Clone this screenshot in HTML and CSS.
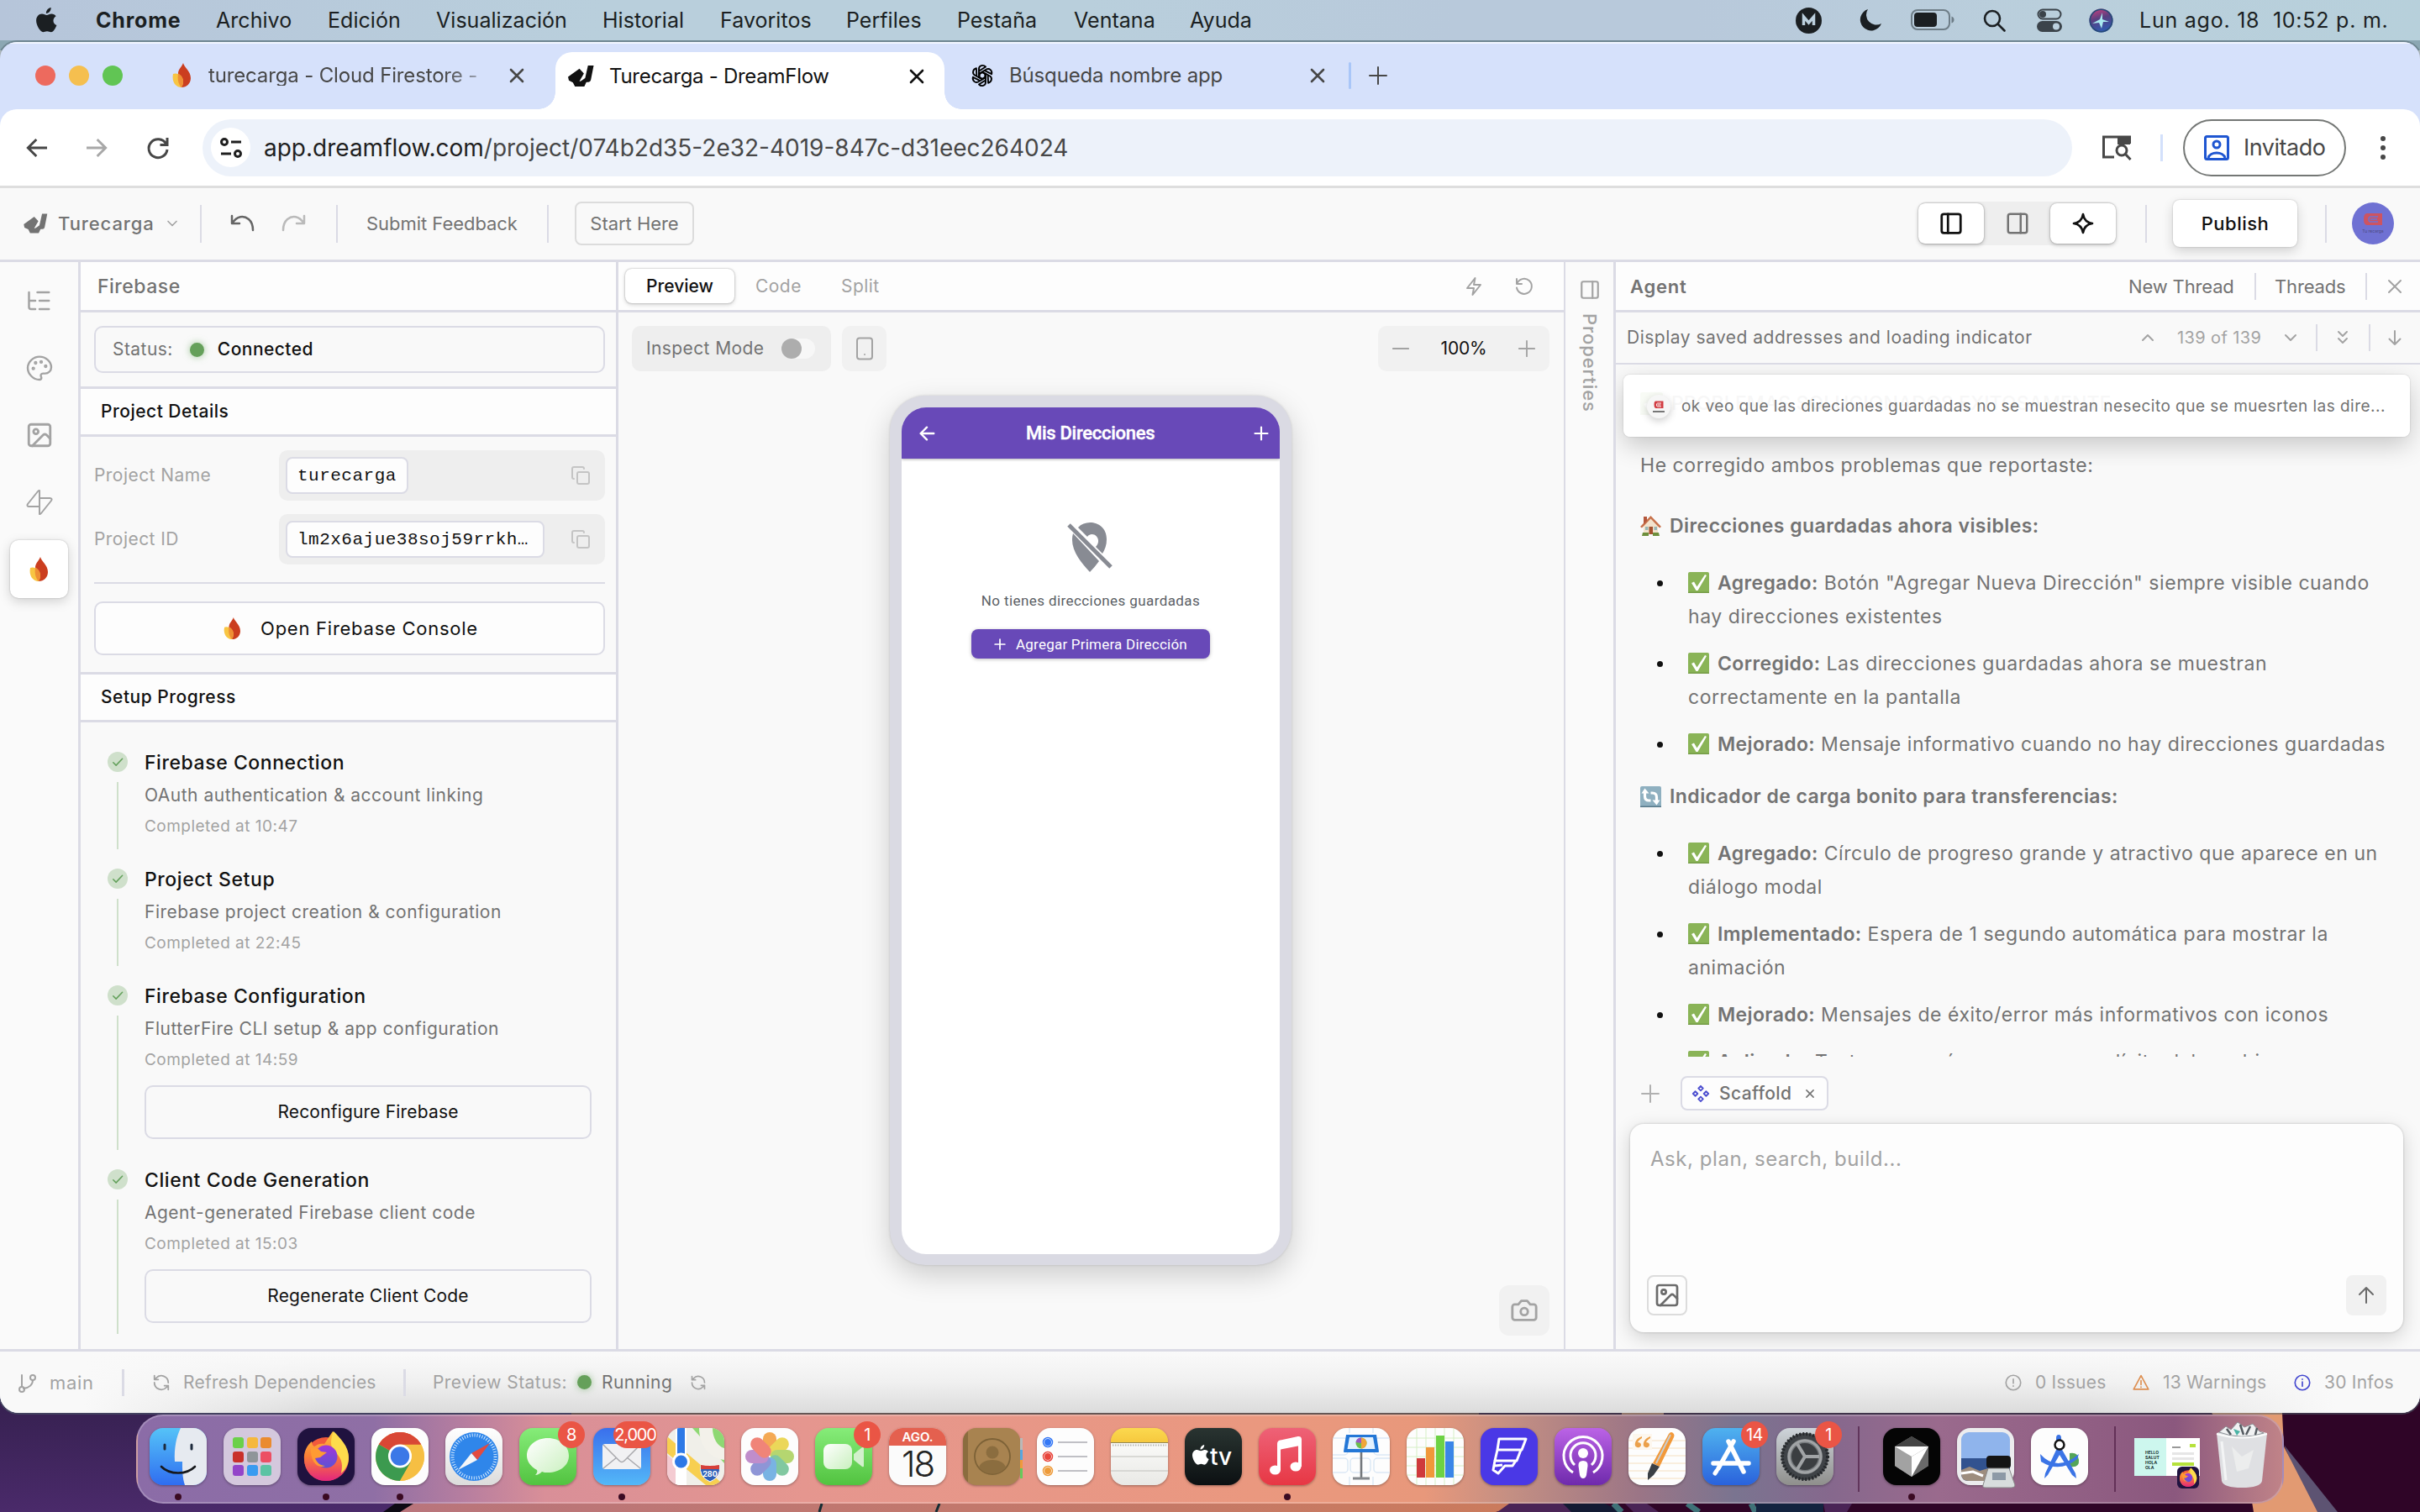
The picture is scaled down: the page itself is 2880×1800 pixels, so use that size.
FILE: index.html
```html
<!DOCTYPE html>
<html lang="es">
<head>
<meta charset="utf-8">
<title>Turecarga - DreamFlow</title>
<link rel="stylesheet" href="styles.css">
</head>
<body>
<svg width="0" height="0" class="defs">
  <defs>
    <symbol id="x" viewBox="0 0 24 24"><path d="M5 5l14 14M19 5L5 19"/></symbol>
    <symbol id="plus" viewBox="0 0 24 24"><path d="M2 12h20M12 2v20"/></symbol>
    <symbol id="left" viewBox="0 0 24 24"><path d="M21 12H4M11.500 4.500L4 12l7.500 7.500"/></symbol>
    <symbol id="copy" viewBox="0 0 24 24"><rect x="8" y="8" width="14" height="14" rx="2"/><path d="M4 16c-1.100 0-2-.9-2-2V4c0-1.100.9-2 2-2h10c1.100 0 2 .9 2 2"/></symbol>
    <symbol id="image" viewBox="0 0 24 24"><rect x="3" y="3" width="18" height="18" rx="2"/><circle cx="9" cy="9" r="2"/><path d="M21 15l-3.100-3.100a2 2 0 0 0-2.800 0L6 21"/></symbol>
    <symbol id="panel-l" viewBox="0 0 24 24"><rect x="3" y="3" width="18" height="18" rx="2"/><path d="M9 3v18"/></symbol>
    <symbol id="panel-r" viewBox="0 0 24 24"><rect x="3" y="3" width="18" height="18" rx="2"/><path d="M15 3v18"/></symbol>
    <symbol id="down" viewBox="0 0 24 24"><path d="M6 9l6 6 6-6"/></symbol>
    <symbol id="up" viewBox="0 0 24 24"><path d="M6 15l6-6 6 6"/></symbol>
    <symbol id="sync" viewBox="0 0 24 24"><path d="M21 12a9 9 0 0 0-15.700-6L3 8M3 3v5h5M3 12a9 9 0 0 0 15.700 6L21 16M16 16h5v5"/></symbol>
    <symbol id="check" viewBox="0 0 24 24"><path d="M5 13l4.500 4.500L19.500 7"/></symbol>
    <symbol id="logo" viewBox="0 0 32 27"><path d="M0 14.500L14 4.500l5.500 6-5.500 9.500h9l-3 6.500H8.500L6 21.500 1 19z"/><path d="M24.500.5H31.500L28 18.500q-.5 2.500-3 2.500H14l7-5z"/></symbol>
    <symbol id="fire" viewBox="0 0 24 30"><path d="M13 0c1 5 9 9.500 9 18 0 6.500-5 11-11 11C7 29 6 20 7 12 7.500 7 11 5 13 0z" fill="#cb3e1f"/><path d="M1 13c5-2.500 12 3 12 9 0 3-1 5-2 7C4 29-1 22 1 13z" fill="#f8c543"/><path d="M7 12.500c4 1.500 6 6 6 9.500 0 3-1 5-2 7-4-4-5-10-4-16.500z" fill="#ee8f35"/></symbol>
    <symbol id="ok" viewBox="0 0 25 25"><rect width="25" height="25" rx="2" fill="#8ab457"/><path d="M4 13l3-1.500 3.500 6L20 3l2 1L11.500 22H9.500z" fill="#fff"/><rect y="23.500" width="25" height="1.500" fill="#759c47"/></symbol>
    <symbol id="apple" viewBox="0 0 24 30"><path d="M17 0c.3 3.500-2.500 6.800-5.500 6.700C11 3.500 14 .4 17 0zM12.300 8.800c1.300 0 3-1.600 5.500-1.500 2 .1 3.800 1 4.900 2.600-4.400 2.700-3.700 8.800.8 10.500-1 2.900-3.600 8-6.400 8-1.700 0-2.400-1-4.600-1-2.200 0-3 1-4.600 1C4.700 28.400 0 20.300 0 15.100 0 10.400 3 7.300 6.600 7.300c2.300 0 3.900 1.500 5.700 1.500z"/></symbol>
    <symbol id="firefox" viewBox="0 0 68 68"><circle cx="34" cy="37" r="26" fill="#f2593c"/><path d="M8 38C7 28 12 20 17 16c0 3 1 5 3 6 4-3 8-4 12-3l10-15c6 6 20 18 19 34-1 14-12 25-27 25S9 52 8 38z" fill="url(#ffg)"/><path d="M43 4c8 8 18 18 18 31 0 8-4 15-9 19 3-14-1-20-9-27-4-5-4-14 0-23z" fill="#fedc4c"/><circle cx="34" cy="34" r="13.500" fill="url(#ffp)"/><path d="M16 24c6-1 9 0 12 4l7 1-8 6-6 1c2 5 6 9 12 9-9 4-18-5-17-21z" fill="#ff9b33"/></symbol>
    <linearGradient id="ffg" x1="0" y1="0" x2="0" y2="1"><stop offset="0" stop-color="#ffc23d"/><stop offset=".5" stop-color="#fb7f36"/><stop offset="1" stop-color="#e3257e"/></linearGradient>
    <linearGradient id="ffp" x1="0" y1="0" x2="0" y2="1"><stop offset="0" stop-color="#a436d8"/><stop offset="1" stop-color="#5c52d4"/></linearGradient>
    <linearGradient id="siri" x1=".3" y1="0" x2=".6" y2="1"><stop offset="0" stop-color="#c2407f"/><stop offset=".4" stop-color="#5a3f80"/><stop offset="1" stop-color="#2b5cb4"/></linearGradient>
    <linearGradient id="glass" x1="0" y1="0" x2="1" y2="1"><stop offset="0" stop-color="#fff"/><stop offset="1" stop-color="#c9f0be"/></linearGradient>
  </defs>
</svg>

<svg class="wallpaper" width="2880" height="1800" viewBox="0 0 2880 1800">
  <defs><linearGradient id="pu" x1="0" y1="0" x2="0" y2="1"><stop offset="0" stop-color="#35204f"/><stop offset="1" stop-color="#4a2a6a"/></linearGradient>
  <linearGradient id="sal" x1="0" y1="0" x2="1" y2="0"><stop offset="0" stop-color="#b9757c"/><stop offset="1" stop-color="#cb7b5c"/></linearGradient></defs>
  <rect width="2880" height="60" fill="#8ba7b3"/>
  <rect y="1600" width="2880" height="200" fill="#2f0527"/>
  <rect y="1660" width="700" height="140" fill="url(#pu)"/>
  <path d="M490 1786h1340l-50 14H476z" fill="url(#sal)"/><path d="M470 1790h22l-16 10h-20z" fill="#0d0a14"/>
  <path d="M680 1680h1080v6H680z" fill="#7b4a3c"/>
  <path d="M978 1790l-3 10M1118 1790l-4 10" stroke="#142c33" stroke-width="3"/>
  <path d="M1796 1790h80l10 10h-104z" fill="#4a2456"/><path d="M1860 1790h50l20 10h-60z" fill="#131a33"/>
  <path d="M1920 1790l10 10M2008 1790l14 10M2084 1790l5 10" stroke="#3f7278" stroke-width="7"/>
  <path d="M1934 1790h26l14 10h-30zM2170 1790h34l-6 10h-26z" fill="#4a2456"/><path d="M2090 1790h80v10h-80z" fill="#13233f"/>
  <path d="M1930 1682h50v4h-50z" fill="#d08866"/>
  <path d="M2718 1720l64 80h-30z" fill="#5d5372"/><path d="M2632 1682h84l2 40 40 78h-76l-10-60z" fill="#e29a72"/>
</svg>

<header class="menubar">
  <svg class="glyph" width="25" height="31"><use href="#apple"/></svg>
  <b>Chrome</b><span>Archivo</span><span>Edición</span><span>Visualización</span><span>Historial</span><span>Favoritos</span><span>Perfiles</span><span>Pestaña</span><span>Ventana</span><span>Ayuda</span>
  <svg width="31" height="31" viewBox="0 0 31 31"><circle cx="15.500" cy="15.500" r="15.500" fill="#1b1f22"/><path d="M9.500 21V11l6 7 6-7v10" fill="none" stroke="#bcd0de" stroke-width="3.500"/></svg>
  <svg width="28" height="28" viewBox="0 0 28 28"><path d="M10 1a13 13 0 1 0 16 17A12 12 0 0 1 10 1z" fill="#1b1f22"/></svg>
  <svg width="52" height="26" viewBox="0 0 52 26"><rect x="1" y="1" width="45" height="23" rx="7" fill="none" stroke="#6e7d87" stroke-width="2"/><rect x="4" y="4" width="27" height="17" rx="4" fill="#1b1f22"/><path d="M48.500 8.500q3 1 3 4t-3 4z" fill="#6e7d87"/></svg>
  <svg class="line" width="27" height="27" viewBox="0 0 27 27" stroke="#1b1f22" stroke-width="2.600"><circle cx="11" cy="11" r="9"/><path d="M18 18l7.500 7.500"/></svg>
  <svg width="30" height="28" viewBox="0 0 30 28"><rect x="1.500" y="1.500" width="27" height="11" rx="5.500" fill="none" stroke="#3b434a" stroke-width="2"/><circle cx="7" cy="7" r="4" fill="#3b434a"/><rect y="15" width="30" height="13" rx="6.500" fill="#3b434a"/><circle cx="23" cy="21.500" r="4" fill="#bcd0de"/></svg>
  <svg width="29" height="29" viewBox="0 0 29 29"><circle cx="14.500" cy="14.500" r="14" fill="url(#siri)"/><circle cx="14.500" cy="14.500" r="13.200" fill="none" stroke="#274a78" stroke-width="1.600"/><path d="M4 18l9-5 3-8 0 8 8 3-7 0-2 8-3-7z" fill="#a9e9f0"/></svg>
  <span class="clock">Lun ago. 18&nbsp; 10:52 p. m.</span>
</header>

<main class="window">
  <div class="tabstrip">
    <div class="lights"><i></i><i></i><i></i></div>
    <div class="tab first"><svg width="24" height="30"><use href="#fire"/></svg><span class="fade">turecarga - Cloud Firestore -</span><svg class="line" width="24" height="24"><use href="#x"/></svg></div>
    <div class="tab active"><svg class="glyph" width="31" height="27"><use href="#logo"/></svg><span>Turecarga - DreamFlow</span><svg class="line" width="24" height="24"><use href="#x"/></svg></div>
    <div class="tab last"><svg class="line" width="28" height="28" viewBox="0 0 28 28" stroke="#000" stroke-width="2"><g id="pet"><path d="M10 6.500V6c0-4 5-5.500 8-2.500M10 6v9.500l4 2.300M18 3.500L11 8"/></g><use href="#pet" transform="rotate(60 14 14)"/><use href="#pet" transform="rotate(120 14 14)"/><use href="#pet" transform="rotate(180 14 14)"/><use href="#pet" transform="rotate(240 14 14)"/><use href="#pet" transform="rotate(300 14 14)"/></svg><span>Búsqueda nombre app</span><svg class="line" width="24" height="24"><use href="#x"/></svg></div>
    <div class="tabsep"></div>
    <svg class="line newtab" width="24" height="24"><use href="#plus"/></svg>
  </div>

  <div class="toolbar">
    <svg class="line" width="32" height="32"><use href="#left"/></svg>
    <svg class="line dim flip" width="32" height="32"><use href="#left"/></svg>
    <svg class="line" width="32" height="32" viewBox="0 0 32 32"><path d="M25.500 11A11 11 0 1 0 27 18M27 4v8.500h-8.500"/></svg>
    <div class="omnibox">
      <div class="site"><svg class="line" width="28" height="24" viewBox="0 0 28 24"><circle cx="6" cy="5" r="3.500"/><path d="M14 5h12M2 19h12"/><circle cx="22" cy="19" r="3.500"/></svg></div>
      <span class="url">app.dreamflow.com<em>/project/074b2d35-2e32-4019-847c-d31eec264024</em></span>
    </div>
    <svg class="line" width="36" height="32" viewBox="0 0 36 32"><path d="M15 27H2.500V3h31v8"/><path d="M19 3h15v9H19z" fill="#474747" stroke="none"/><circle cx="24" cy="19" r="6"/><path d="M28.500 23.500l6 6.500"/></svg>
    <div class="vsep blue"></div>
    <div class="profile"><svg class="line" width="30" height="30" viewBox="0 0 30 30"><rect x="1.500" y="1.500" width="27" height="27" rx="2"/><circle cx="15" cy="11" r="4"/><path d="M5 27c2-8 18-8 20 0"/></svg><span>Invitado</span></div>
    <svg class="glyph dots" width="20" height="30" viewBox="0 0 20 30"><circle cx="10" cy="4" r="3"/><circle cx="10" cy="15" r="3"/><circle cx="10" cy="26" r="3"/></svg>
  </div>

  <div class="apphead">
    <svg class="glyph" width="29" height="24"><use href="#logo"/></svg>
    <span class="name">Turecarga</span>
    <svg class="line dim" width="20" height="20"><use href="#down"/></svg>
    <div class="vsep"></div>
    <svg class="line" width="30" height="26" viewBox="0 0 30 26" stroke-width="2.500"><path d="M2 4v9h9M2.500 12.500C8 4 16 3 22 8c4 3.500 5 8 5 13"/></svg>
    <svg class="line pale flip" width="30" height="26" viewBox="0 0 30 26" stroke-width="2.500"><path d="M2 4v9h9M2.500 12.500C8 4 16 3 22 8c4 3.500 5 8 5 13"/></svg>
    <div class="vsep"></div>
    <span>Submit Feedback</span>
    <div class="vsep"></div>
    <div class="start">Start Here</div>
    <div class="toggles">
      <div class="on"><svg class="line" width="30" height="30" stroke-width="2.200"><use href="#panel-l"/></svg></div>
      <div><svg class="line" width="30" height="30"><use href="#panel-r"/></svg></div>
      <div class="on"><svg class="line" width="28" height="28" viewBox="0 0 28 28" stroke-width="2.600"><path d="M14 3c1 6.500 4.500 10 11 11-6.500 1-10 4.500-11 11-1-6.500-4.500-10-11-11 6.500-1 10-4.500 11-11z"/></svg></div>
    </div>
    <div class="vsep"></div>
    <div class="publish">Publish</div>
    <div class="vsep"></div>
    <div class="avatar"><svg width="24" height="15" viewBox="0 0 24 15"><path d="M5 0h18v14H5Q1 14 1 7t4-7z" fill="#cd5461"/><path d="M18 4H9q-2 0-2 3t2 3h9M9 7h8" stroke="#7072d2" stroke-width="1.500" fill="none"/></svg><small>Tu recarga</small></div>
  </div>

  <div class="body">
    <nav class="rail">
      <div><svg class="line" width="30" height="30" viewBox="0 0 24 24"><path d="M10 4h11M12 12h9M12 20h9M2 4v14a2 2 0 0 0 2 2h4M2 12h6"/></svg></div>
      <div><svg class="line" width="32" height="32" viewBox="0 0 24 24" stroke-width="1.800"><path d="M12 2C6.500 2 1.500 6.500 1.500 12S6.500 22.500 12 22.500c1 0 1.700-.8 1.700-1.700 0-.9-1-1.500-.4-2.800.4-.8 1-1 1.800-1H17c3 0 5.500-2.500 5.500-5.500C22.500 6.300 17.500 2 12 2z"/><circle cx="13.500" cy="6.700" r=".7"/><circle cx="17.500" cy="10.500" r=".7"/><circle cx="8.500" cy="7.500" r=".7"/><circle cx="6.500" cy="12.500" r=".7"/></svg></div>
      <div><svg class="line" width="34" height="34"><use href="#image"/></svg></div>
      <div><svg class="line" width="32" height="30" viewBox="0 0 32 30" stroke-width="2"><path d="M16 1v19H3.500C1.500 20 1 18.500 2 17L14 2c1-1.200 2-1 2-1zM16 29V10h12.500c2 0 2.500 1.500 1.500 3L18 28c-1 1.200-2 1-2 1z"/></svg></div>
      <div class="active"><svg width="26" height="30"><use href="#fire"/></svg></div>
    </nav>

    <section class="panel">
      <h2 class="phead">Firebase</h2>
      <div class="statussec"><div class="statusbox"><span>Status:</span><i class="dot"></i><b>Connected</b></div></div>
      <h3>Project Details</h3>
      <div class="details">
        <div class="field"><label>Project Name</label><div class="val"><code>turecarga</code><svg class="line" width="24" height="24"><use href="#copy"/></svg></div></div>
        <div class="field"><label>Project ID</label><div class="val"><code>lm2x6ajue38soj59rrkh…</code><svg class="line" width="24" height="24"><use href="#copy"/></svg></div></div>
        <hr>
        <div class="console"><svg width="22" height="27"><use href="#fire"/></svg>Open Firebase Console</div>
      </div>
      <h3>Setup Progress</h3>
      <div class="steps">
        <div class="step"><div class="mark"><i><svg class="line" width="18" height="18"><use href="#check"/></svg></i></div><div class="info"><b>Firebase Connection</b><p>OAuth authentication &amp; account linking</p><small>Completed at 10:47</small></div></div>
        <div class="step"><div class="mark"><i><svg class="line" width="18" height="18"><use href="#check"/></svg></i></div><div class="info"><b>Project Setup</b><p>Firebase project creation &amp; configuration</p><small>Completed at 22:45</small></div></div>
        <div class="step act"><div class="mark"><i><svg class="line" width="18" height="18"><use href="#check"/></svg></i></div><div class="info"><b>Firebase Configuration</b><p>FlutterFire CLI setup &amp; app configuration</p><small>Completed at 14:59</small><div class="sbtn">Reconfigure Firebase</div></div></div>
        <div class="step act"><div class="mark"><i><svg class="line" width="18" height="18"><use href="#check"/></svg></i></div><div class="info"><b>Client Code Generation</b><p>Agent-generated Firebase client code</p><small>Completed at 15:03</small><div class="sbtn">Regenerate Client Code</div></div></div>
      </div>
    </section>

    <section class="center">
      <div class="ctabs">
        <div class="cur">Preview</div><span>Code</span><span>Split</span>
        <svg class="line" width="24" height="24" viewBox="0 0 24 24"><path d="M13.500 2L4 14h8l-1.500 8L20 10h-8z"/></svg>
        <svg class="line" width="24" height="24" viewBox="0 0 24 24"><path d="M3 3v6h6M3.500 8.500A9 9 0 1 1 3 13.500"/></svg>
      </div>
      <div class="canvas">
        <div class="tools">
          <div class="inspect"><span>Inspect Mode</span><div class="switch"><i></i></div></div>
          <div class="device"><svg class="line" width="22" height="28" viewBox="0 0 22 28"><rect x="2" y="1.500" width="18" height="25" rx="3"/><path d="M11 21h.01"/></svg></div>
          <div class="zoom"><svg class="line" width="22" height="24" viewBox="0 0 24 24"><path d="M2 12h20"/></svg><span>100%</span><svg class="line" width="22" height="24"><use href="#plus"/></svg></div>
        </div>
        <div class="phone">
          <div class="screen">
            <div class="appbar"><svg class="line" width="22" height="22" viewBox="0 0 24 24"><path d="M21 12H4M12 4l-8 8 8 8"/></svg><b>Mis Direcciones</b><svg class="line" width="20" height="20" viewBox="0 0 24 24"><path d="M3 12h18M12 3v18"/></svg></div>
            <svg class="pin" width="56" height="60" viewBox="0 0 56 60"><path d="M8 14C3 32 17 48 28 60q6-6 11-13zM14 7C24-4 48 0 48 21c0 7-2 12-5 17l-8-8c9-10-4-20-10-12z" fill="#888b93"/><path d="M3 4l50 50" stroke="#888b93" stroke-width="5"/></svg>
            <p>No tienes direcciones guardadas</p>
            <div class="add"><svg class="line" width="14" height="14" viewBox="0 0 24 24" stroke-width="3"><path d="M2 12h20M12 2v20"/></svg>Agregar Primera Dirección</div>
          </div>
        </div>
        <div class="camera"><svg class="line" width="34" height="34" viewBox="0 0 24 24"><path d="M14.500 4h-5L7 7H4a2 2 0 0 0-2 2v9a2 2 0 0 0 2 2h16a2 2 0 0 0 2-2V9a2 2 0 0 0-2-2h-3z"/><circle cx="12" cy="13" r="3"/></svg></div>
      </div>
    </section>

    <aside class="props"><svg class="line" width="26" height="26"><use href="#panel-r"/></svg><span>Properties</span></aside>

    <section class="agent">
      <div class="ahead"><b>Agent</b><span>New Thread</span><div class="vsep"></div><span>Threads</span><div class="vsep"></div><svg class="line" width="24" height="24"><use href="#x"/></svg></div>
      <div class="thread"><span class="title">Display saved addresses and loading indicator</span><svg class="line" width="24" height="24"><use href="#up"/></svg><span>139 of 139</span><svg class="line" width="24" height="24"><use href="#down"/></svg><div class="vsep"></div><svg class="line" width="24" height="24" viewBox="0 0 24 24"><path d="M7 5l5 5 5-5M7 13l5 5 5-5"/></svg><div class="vsep"></div><svg class="line" width="24" height="24" viewBox="0 0 24 24"><path d="M12 4v16M5.500 13.500L12 20l6.500-6.500"/></svg></div>
      <div class="msgs">
        <h4><svg width="27" height="27"><use href="#ok"/></svg>PROBLEMAS SOLUCIONADOS EXITOSAMENTE</h4>
        <p>He corregido ambos problemas que reportaste:</p>
        <h4 class="g1"><svg width="25" height="26" viewBox="0 0 25 26"><path d="M4 11l8.500-8L21 11v12H4z" fill="#f3e3cd"/><path d="M3 21h7v4H2zM15 21h7l1 4h-8z" fill="#6d8f3c"/><path d="M0 14L12.500 1 25 14l-2 1.500L12.500 4.500 2 15.500z" fill="#c7714a"/><path d="M4 2h4v5l-4 4z" fill="#b4573b"/><path d="M10.500 14h4.500v9h-4.500z" fill="#a5512e"/><path d="M6 14h3.500v4H6zM16.500 14H20v4h-3.500z" fill="#9ab7b4"/></svg>Direcciones guardadas ahora visibles:</h4>
        <ul>
          <li><svg width="25" height="25"><use href="#ok"/></svg><b>Agregado:</b> Botón "Agregar Nueva Dirección" siempre visible cuando<br>hay direcciones existentes</li>
          <li><svg width="25" height="25"><use href="#ok"/></svg><b>Corregido:</b> Las direcciones guardadas ahora se muestran<br>correctamente en la pantalla</li>
          <li><svg width="25" height="25"><use href="#ok"/></svg><b>Mejorado:</b> Mensaje informativo cuando no hay direcciones guardadas</li>
        </ul>
        <h4 class="g2"><svg width="25" height="25" viewBox="0 0 25 25"><rect width="25" height="25" rx="2" fill="#8fb0c0"/><rect y="23.500" width="25" height="1.500" fill="#57788a"/><path d="M5.500 7v5q0 5 5 5h2M19.500 18v-5q0-5-5-5h-2" fill="none" stroke="#fff" stroke-width="3.200"/><path d="M1.500 8.500l4-6 5 6zM23.500 16.500l-4 6-5-6z" fill="#fff"/></svg>Indicador de carga bonito para transferencias:</h4>
        <ul>
          <li><svg width="25" height="25"><use href="#ok"/></svg><b>Agregado:</b> Círculo de progreso grande y atractivo que aparece en un<br>diálogo modal</li>
          <li><svg width="25" height="25"><use href="#ok"/></svg><b>Implementado:</b> Espera de 1 segundo automática para mostrar la<br>animación</li>
          <li><svg width="25" height="25"><use href="#ok"/></svg><b>Mejorado:</b> Mensajes de éxito/error más informativos con iconos</li>
          <li><svg width="25" height="25"><use href="#ok"/></svg><b>Aplicado:</b> Texto en menú para un uso explícito del cambio</li>
        </ul>
        <div class="card"><div class="ava"><svg width="12" height="10" viewBox="0 0 24 18"><path d="M5 0h18v17H5Q1 16 1 8t4-8z" fill="#d23c42"/><path d="M18 5H9q-2 0-2 4t2 4h9M9 9h8" stroke="#fff" stroke-width="2" fill="none"/></svg><i></i></div><span>ok veo que las direciones guardadas no se muestran nesecito que se muesrten las dire...</span></div>
      </div>
      <div class="chips"><svg class="line" width="24" height="24"><use href="#plus"/></svg><div class="chip"><svg class="line" width="22" height="22" viewBox="0 0 24 24" stroke="#4d4fd0"><path d="M12 2l3 3-3 3-3-3zM12 16l3 3-3 3-3-3zM5 9l3 3-3 3-3-3zM19 9l3 3-3 3-3-3z"/></svg><span>Scaffold</span><svg class="line" width="14" height="14"><use href="#x"/></svg></div></div>
      <div class="prompt"><span>Ask, plan, search, build...</span>
        <div class="acts"><div class="img"><svg class="line" width="32" height="32"><use href="#image"/></svg></div><div class="send"><svg class="line" width="24" height="24" viewBox="0 0 24 24"><path d="M12 21V3M4 11l8-8 8 8"/></svg></div></div>
      </div>
    </section>
  </div>

  <footer class="statusbar">
    <svg class="line" width="24" height="24" viewBox="0 0 24 24"><path d="M5 3v14M18 9c0 5-4 9-11 10"/><circle cx="18" cy="6" r="3"/><circle cx="5" cy="20" r="3"/></svg>
    <span class="br">main</span><div class="vsep"></div>
    <svg class="line" width="22" height="22"><use href="#sync"/></svg><span class="t">Refresh Dependencies</span><div class="vsep"></div>
    <span>Preview Status:</span><i class="dot"></i><span class="run">Running</span>
    <svg class="line" width="20" height="20"><use href="#sync"/></svg>
    <svg class="line" width="20" height="20" viewBox="0 0 24 24"><circle cx="12" cy="12" r="10.500"/><path d="M12 7v6M12 16.500v.5"/></svg><span class="t">0 Issues</span>
    <svg class="line" width="20" height="20" viewBox="0 0 24 24" stroke="#dd8f52"><path d="M12 2L1.500 21.500h21zM12 9v6M12 18v.5"/></svg><span class="t">13 Warnings</span>
    <svg class="line" width="20" height="20" viewBox="0 0 24 24" stroke="#4448cf"><circle cx="12" cy="12" r="10.500"/><path d="M12 11v6M12 7v.5"/></svg><span class="t">30 Infos</span>
  </footer>
</main>

<div class="dock">
  <div class="app finder open"><svg viewBox="0 0 68 68"><path d="M37 0h31v68H42c-3-9-3-18-3-28h-9C29 24 32 10 37 0z" fill="#e6eaf0"/><path d="M18 20v5M50 20v5" stroke="#1d2a3c" stroke-width="3" stroke-linecap="round"/><path d="M14 46c10 10 30 10 40 0" fill="none" stroke="#16181c" stroke-width="2.600" stroke-linecap="round"/></svg></div>
  <div class="app launch"><svg viewBox="0 0 68 68"><rect x="11" y="11" width="13" height="13" rx="3" fill="#6bd04a"/><rect x="28" y="11" width="13" height="13" rx="3" fill="#f5b83d"/><rect x="44" y="11" width="13" height="13" rx="3" fill="#ea8b2f"/><rect x="11" y="28" width="13" height="13" rx="3" fill="#c9302a"/><rect x="28" y="28" width="13" height="13" rx="3" fill="#8f9599"/><rect x="44" y="28" width="13" height="13" rx="3" fill="#ec4f63"/><rect x="11" y="44" width="13" height="13" rx="3" fill="#9345c9"/><rect x="28" y="44" width="13" height="13" rx="3" fill="#3a9bf0"/><rect x="44" y="44" width="13" height="13" rx="3" fill="#5cc3a4"/></svg></div>
  <div class="app ff open"><svg viewBox="0 0 68 68"><use href="#firefox"/></svg></div>
  <div class="app white open"><svg viewBox="0 0 68 68"><circle cx="34" cy="34" r="29" fill="#fbc23f"/><path d="M34 34L8.900 19.500a29 29 0 0 1 50.200 0z" fill="#d94735"/><path d="M8.900 19.500A29 29 0 0 0 34 63L47 41 34 34z" fill="#3c9a4f"/><path d="M34 19.500h25.100A29 29 0 0 1 34 63l13-23z" fill="#f6bf43"/><path d="M8.900 19.500A29 29 0 0 1 59.100 19.500H34z" fill="#d94735"/><circle cx="34" cy="33.500" r="14" fill="#fff"/><circle cx="34" cy="33.500" r="11.200" fill="#3b78e7"/></svg></div>
  <div class="app safari"><svg viewBox="0 0 68 68"><circle cx="34" cy="34" r="29" fill="#2f86ea"/><circle cx="34" cy="34" r="25.500" fill="none" stroke="#d8ecff" stroke-width="4" stroke-dasharray="1 2"/><path d="M53 18L38 38l-7-8z" fill="#e34a3f"/><path d="M15 50l16-20 7 8z" fill="#f4f6f8"/></svg></div>
  <div class="app msg"><svg viewBox="0 0 68 68"><path d="M34 12c14 0 25 9 25 21S48 53 34 53c-3 0-5 0-7-1-2 2-5 4-8 4 2-2 3-4 2-6C14 46 9 40 9 33c0-12 11-21 25-21z" fill="url(#glass)"/></svg><span class="badge">8</span></div>
  <div class="app mail open"><svg viewBox="0 0 68 68"><rect x="11" y="19" width="46" height="30" rx="3" fill="#f1f1f3"/><path d="M12 20l19 19q3 3 6 0l19-19M12 48l16-13M56 48L40 35" fill="none" stroke="#a9a9ad" stroke-width="1.500"/></svg><span class="badge wide">2,000</span></div>
  <div class="app maps"><svg viewBox="0 0 68 68"><path d="M30 0h38v42z" fill="#8ed873"/><path d="M38 0c0 20 12 36 30 38V24C60 22 54 12 54 0z" fill="#f3f1ea"/><path d="M0 10l68 58H46L0 30z" fill="#f7cf50"/><path d="M0 32l10 8v28H0z" fill="#f4cbd2"/><rect x="10" y="0" width="13" height="68" fill="#fff"/><rect x="12" width="9" height="36" fill="#2e79e6"/><circle cx="16.500" cy="40" r="10.500" fill="#fff"/><circle cx="16.500" cy="40" r="7.500" fill="#2e79e6"/><path d="M40 44q11 2 22 0 3 14-11 20-14-6-11-20z" fill="#2f62b8" stroke="#fff"/><path d="M40 44q11 2 22 0v5H40z" fill="#d6403a"/><text x="51" y="58" font-size="9" font-weight="700" text-anchor="middle" fill="#fff">280</text></svg></div>
  <div class="app white"><svg viewBox="0 0 68 68"><g class="petals"><rect x="26" y="5" width="16" height="28" rx="8" fill="#f29a38"/><rect x="26" y="5" width="16" height="28" rx="8" fill="#e8d03c" transform="rotate(45 34 34)"/><rect x="26" y="5" width="16" height="28" rx="8" fill="#a9cf58" transform="rotate(90 34 34)"/><rect x="26" y="5" width="16" height="28" rx="8" fill="#6bbf90" transform="rotate(135 34 34)"/><rect x="26" y="5" width="16" height="28" rx="8" fill="#62a6de" transform="rotate(180 34 34)"/><rect x="26" y="5" width="16" height="28" rx="8" fill="#7b83cf" transform="rotate(225 34 34)"/><rect x="26" y="5" width="16" height="28" rx="8" fill="#b579c2" transform="rotate(270 34 34)"/><rect x="26" y="5" width="16" height="28" rx="8" fill="#ee6f61" transform="rotate(315 34 34)"/></g></svg></div>
  <div class="app msg"><svg viewBox="0 0 68 68"><rect x="10" y="19" width="34" height="30" rx="8" fill="url(#glass)"/><path d="M46 31l10-8q2-1 2 1v21q0 2-2 1l-10-8z" fill="#d2f0cc"/></svg><span class="badge">1</span></div>
  <div class="app cal"><b>AGO.</b><span>18</span></div>
  <div class="app book"><svg viewBox="0 0 68 68"><rect width="6" height="68" fill="#8a6c3e"/><circle cx="35" cy="34" r="21" fill="none" stroke="#7d6237" stroke-width="1.800"/><circle cx="35" cy="29" r="7.500" fill="#8b6d3f"/><path d="M19 47c3-12 29-12 32 0-8 10-24 10-32 0z" fill="#8b6d3f"/></svg><i></i></div>
  <div class="app white"><svg viewBox="0 0 68 68"><g fill="none" stroke-width="1.500"><circle cx="13" cy="17" r="5.500" stroke="#3478f6"/><circle cx="13" cy="34" r="5.500" stroke="#e8453c"/><circle cx="13" cy="51" r="5.500" stroke="#ee9b3a"/></g><circle cx="13" cy="17" r="4" fill="#3478f6"/><circle cx="13" cy="34" r="4" fill="#e8453c"/><circle cx="13" cy="51" r="4" fill="#ee9b3a"/><path d="M25 17h35M25 34h35M25 51h35" stroke="#c0c0c5" stroke-width="1.800"/></svg></div>
  <div class="app notes"><svg viewBox="0 0 68 68"><path d="M0 17.500h68" stroke="#8f8658" stroke-width="1.200"/><path d="M2 20.500h64" stroke="#b8b8b4" stroke-width="2" stroke-dasharray="1.500 1.500"/><path d="M0 34h68M0 51h68" stroke="#d0d0cc" stroke-width="1.500"/></svg></div>
  <div class="app tv"><svg viewBox="0 0 68 68"><svg x="9" y="20" width="20" height="25" fill="#fff"><use href="#apple"/></svg><text x="30" y="44" font-size="28" font-weight="500" fill="#fff">tv</text></svg></div>
  <div class="app music open"><svg viewBox="0 0 68 68"><path d="M24 50V19q0-2 2-2.500L47 12q2-.4 2 1.500V46" fill="none" stroke="#fff" stroke-width="4"/><path d="M24 17l25-5v9l-25 5z" fill="#fff"/><ellipse cx="19.500" cy="50" rx="6.500" ry="5.500" fill="#fff"/><ellipse cx="44" cy="46" rx="6.500" ry="5.500" fill="#fff"/></svg></div>
  <div class="app white"><svg viewBox="0 0 68 68"><g fill="none" stroke="#dbe8f5" stroke-width="1.500"><rect x="-4" y="12" width="22" height="20" rx="4"/><rect x="-4" y="36" width="22" height="17" rx="4"/><rect x="21" y="36" width="24" height="17" rx="4"/><rect x="49" y="12" width="24" height="20" rx="4"/><rect x="49" y="36" width="24" height="17" rx="4"/><path d="M20 0v6M48 0v6M20 58v10M48 58v10"/></g><path d="M16 8h36l3 20q0 1-1 1H14q-1 0-1-1z" fill="#2477d6"/><path d="M20 11h28l2.500 14h-33z" fill="#e4f2ff"/><circle cx="34" cy="18" r="6.500" fill="#6bbf4c"/><path d="M34 18v-6.500a6.500 6.500 0 0 1 0 13z" fill="#f0a53a"/><path d="M34 18l-6.400-1a6.500 6.500 0 0 1 6.400-5.500z" fill="#9b59c6"/><path d="M34 29v30" stroke="#74787c" stroke-width="2.600"/><path d="M24 60h20" stroke="#85898d" stroke-width="3"/></svg></div>
  <div class="app white"><svg viewBox="0 0 68 68"><path d="M12 0v68M23 0v68M34 0v68M45 0v68M56 0v68M0 12h68M0 23h68M0 34h68M0 45h68M0 56h68" stroke="#d5efc5" stroke-width="1"/><rect x="12" y="36" width="10" height="23" fill="#cf3a3c"/><rect x="23" y="23" width="10" height="36" fill="#f0983a"/><rect x="35" y="9" width="10" height="50" fill="#6dd244"/><rect x="46" y="16" width="10" height="43" fill="#3a86e8"/></svg></div>
  <div class="app flow"><svg viewBox="0 0 68 68"><path d="M22 13h32l-5 13H20zM20 26l-3 13h26l5-13M17 39l-2 11 6 4 8-9h9l4-6M17 45l9-1M22 13l-2 13 29 0" fill="none" stroke="#fff" stroke-width="3" stroke-linejoin="round"/></svg></div>
  <div class="app pod"><svg viewBox="0 0 68 68"><g fill="none" stroke="#fff" stroke-width="3"><path d="M22 53A23 23 0 1 1 46 53"/><path d="M24 44a15 15 0 1 1 20 0"/></g><circle cx="34" cy="30" r="6" fill="#fff"/><path d="M34 39q6 0 5.500 6l-1.500 11q-1 4-4 4t-4-4l-1.500-11q-.5-6 5.500-6z" fill="#fff"/></svg></div>
  <div class="app white"><svg viewBox="0 0 68 68"><path d="M0 15h68M0 24h68M0 33h68M0 42h68M0 51h68M0 60h68" stroke="#f5dfc0" stroke-width="1"/><path d="M5 7h23v19H5z" fill="#fdf7ee"/><path d="M16 10c-6 2-9 7-8 11 1 3 7 3 7-1 0-2-2-3-4-3 1-2 3-4 5-5zM26 10c-6 2-9 7-8 11 1 3 7 3 7-1 0-2-2-3-4-3 1-2 3-4 5-5z" fill="#eba04a"/><path d="M48 7q3-4 6 0 1 2 0 4L37 46l-8-4z" fill="#f2993a"/><path d="M28 42l9 4-7 10-7 6 0-8z" fill="#3a3f45"/><path d="M50 8L33 42" stroke="#c9cdd0" stroke-width="2"/></svg></div>
  <div class="app store"><svg viewBox="0 0 68 68"><path d="M31 16l18 36M37 16L19 48M13 42h42" stroke="#fff" stroke-width="5.500" stroke-linecap="round"/><path d="M17 51l-2 3" stroke="#fff" stroke-width="5" stroke-linecap="round"/></svg><span class="badge">14</span></div>
  <div class="app prefs"><svg viewBox="0 0 68 68"><circle cx="34" cy="34" r="28" fill="#3f4347"/><circle cx="34" cy="34" r="27" fill="none" stroke="#25282b" stroke-width="4" stroke-dasharray="2 2"/><circle cx="34" cy="34" r="21" fill="#74787b"/><circle cx="34" cy="34" r="16" fill="#3b3e41"/><path d="M34 34h17M34 34l-9-15M34 34l-9 15" stroke="#a1a4a6" stroke-width="4"/><circle cx="34" cy="34" r="19" fill="none" stroke="#a1a4a6" stroke-width="3"/></svg><span class="badge">1</span></div>
  <div class="dsep"></div>
  <div class="app cursor open"><svg viewBox="0 0 68 68"><path d="M34 10l20 12v23L34 58 14 45V22z" fill="#8c8c8c"/><path d="M34 58V34l20-12v23z" fill="#6a6a6a"/><path d="M54 22L34 58V34z" fill="#fff"/><path d="M14 22h40L34 10z" fill="#454545"/><path d="M14 22l20 12v24L14 45z" fill="#a2a2a2"/><path d="M14 22h40L34 34z" fill="#fff"/></svg></div>
  <div class="app view"><svg viewBox="0 0 68 68"><rect x="5" y="5" width="58" height="58" rx="9" fill="#8fb4ec"/><path d="M5 36h58v18q0 9-9 9H14q-9 0-9-9z" fill="#31528f"/><path d="M5 50l10-4 12 5 10-3 8 15H14q-9 0-9-9z" fill="#9d8d7e"/><path d="M5 54l14-2 12 5" stroke="#fff" stroke-width="3" fill="none"/><rect x="35" y="33" width="29" height="15" rx="4" fill="#141414"/><path d="M37 48h25l7 20q0 3-4 3H34q-4 0-3-3z" fill="#d8dddd" stroke="#888"/><path d="M42 53h16v9H42z" fill="#8d9aa6"/></svg></div>
  <div class="app white"><svg viewBox="0 0 68 68"><path d="M46 30q10-2 11 8t-11 8z" fill="#54a559"/><path d="M33 8q3 0 3 4v6h-6v-6q0-4 3-4z" fill="#3b74e6"/><path d="M31 24l5 0L53 54l1 6-5-4L34 32 20 56l-4 4 1-6z" fill="#3b74e6"/><path d="M11 31q20 22 46 0l-2 6Q34 54 12 40z" fill="#3b74e6"/><circle cx="34" cy="20" r="5.500" fill="#fff" stroke="#151515" stroke-width="2.500"/></svg></div>
  <div class="dsep"></div>
  <div class="thumb"><div class="mint"><b>HELLO<br>SALUT<br>HOLA<br>OLÁ</b></div><svg width="40" height="44" viewBox="0 0 40 44"><path d="M28 7h7v4h-7z" fill="#b6e23c"/><path d="M7 10h10v2H7z" fill="#999"/><path d="M7 17h26v3H7zM7 23h26v3H7z" fill="#e6e6e6"/><path d="M7 29h26v4H7z" fill="#b6e23c"/></svg><svg class="ffmini" viewBox="0 0 68 68"><rect width="68" height="68" rx="15" fill="#20123f"/><use href="#firefox"/></svg></div>
  <svg class="trash" width="64" height="80" viewBox="0 0 64 80"><path d="M2 14q30-9 60 0l-6 57q-2 8-24 8t-24-8z" fill="#dfe0e3"/><path d="M5 13l8-7 6 4 8-9 8 6 10-4 8 9 5 2q-26 9-53-1z" fill="#f1f2f3" stroke="#8b9095"/><path d="M14 9l5 7M30 4l4 12M42 6l-5 10M50 8l-2 8" stroke="#555b61" stroke-width="2.500"/><path d="M22 9l8 3-4 5z" fill="#4bb3a5"/><path d="M2 15q30 9 60 0" fill="none" stroke="#fbfbfb" stroke-width="2"/><path d="M20 30l12 12 14-8-6 22-14 4z" fill="#eceded"/><path d="M8 24l5 46" stroke="#f3f4f5" stroke-width="3"/></svg>
</div>
</body>
</html>
```
FILE: styles.css
```css
* { box-sizing: border-box; margin: 0; padding: 0; }
body { width: 2880px; height: 1800px; overflow: hidden; position: relative; font-family: "Inter", "Liberation Sans", sans-serif; font-size: 21px; letter-spacing: .45px; line-height: 24px; color: #737373; white-space: nowrap; }
svg { display: block; flex: none; }
i, em { font-style: normal; }
.defs { position: absolute; }
.wallpaper { position: absolute; left: 0; top: 0; z-index: -1; }
.line { fill: none; stroke-linecap: round; stroke-linejoin: round; }
.line:not([stroke]) { stroke: currentColor; }
.line:not([stroke-width]) { stroke-width: 2; }
.glyph { fill: currentColor; }
.flip { transform: scaleX(-1); }
.vsep { width: 2px; height: 45px; background: #dbdbe5; }
.petals { opacity: .85; }

/* Menu bar */
.menubar { height: 48px; padding-left: 43px; display: grid; grid-template-columns: 71px 143px 133px 129px 198px 140px 150px 132px 139px 138px 721px 76px 61px 86px 64px 62px 60px 334px; align-items: center; background: linear-gradient(90deg, #b6c5da 0, #b9cfdc 25%, #b9cfdc 45%, #b8c9db 60%, #b8c9db 70%, #bacfdc 85%, #b7d0db); font-size: 25px; letter-spacing: .04px; color: #1b1f22; }
.menubar b { letter-spacing: .8px; }
.menubar .clock { letter-spacing: .76px; white-space: pre; }

/* Browser window */
.window { margin-top: 2px; height: 1632px; display: flex; flex-direction: column; border-radius: 20px 20px 22px 22px; overflow: hidden; background: #d6e1fb; box-shadow: 0 0 0 2px rgba(80,100,110,.5); }
.tabstrip { height: 80px; display: flex; align-items: center; font-size: 24px; letter-spacing: -.15px; color: #474747; box-shadow: inset 0 2px #f2f6ff; }
.lights { width: 205px; padding-left: 42px; display: flex; gap: 16px; }
.lights i { width: 24px; height: 24px; border-radius: 50%; background: #ed6a5e; }
.lights i:nth-child(2) { background: #f5bf4f; }
.lights i:nth-child(3) { background: #61c554; }
.tab { display: grid; align-items: center; height: 68px; }
.tab .line { stroke-width: 2.600; }
.tab.first { width: 456px; grid-template-columns: 43px 355px 24px; }
.fade { width: 334px; -webkit-mask-image: linear-gradient(90deg, #000 280px, rgba(0,0,0,.3) 330px); mask-image: linear-gradient(90deg, #000 280px, rgba(0,0,0,.3) 330px); }
.tab.active { position: relative; align-self: flex-end; width: 463px; padding: 0 0 11px 15px; grid-template-columns: 49px 354px 24px; background: #fff; border-radius: 20px 20px 0 0; color: #111; letter-spacing: -.28px; }
.tab.active::before, .tab.active::after { content: ""; position: absolute; bottom: 0; width: 20px; height: 20px; left: -20px; background: radial-gradient(circle at 0 0, transparent 19.5px, #fff 20px); }
.tab.active::after { left: auto; right: -20px; background: radial-gradient(circle at 100% 0, transparent 19.5px, #fff 20px); }
.tab.last { width: 481px; padding-left: 31px; grid-template-columns: 46px 355px 24px; }
.tab.last .line[stroke] { stroke-width: 1.900; }
.tabsep { width: 3px; height: 32px; border-radius: 2px; background: #a9c6f8; }
.newtab { margin-left: 20px; stroke-width: 2.800; }
.toolbar { height: 94px; flex: none; padding-left: 28px; display: grid; grid-template-columns: 71px 73px 69px 2260px 70px 27px 228px 20px; align-items: center; background: #fff; border-bottom: 3px solid #dedede; border-radius: 20px 20px 0 0; color: #474747; }
.toolbar .line { stroke-width: 3; stroke-linecap: butt; stroke-linejoin: miter; }
.toolbar > .line.dim { color: #a8a8a8; }
.toolbar > .line:not([viewBox]) { stroke-width: 2.200; }
.omnibox { width: 2225px; height: 68px; padding-left: 10px; display: flex; align-items: center; border-radius: 34px; background: #edf2fa; }
.site { width: 47px; height: 47px; display: grid; place-items: center; border-radius: 50%; background: #fff; color: #1f1f1f; }
.url { margin-left: 16px; font-size: 28px; letter-spacing: 0; line-height: 36px; color: #1f1f1f; }
.url em { color: #474747; }
.vsep.blue { width: 3px; height: 32px; background: #d3e0fb; }
.profile { width: 194px; height: 68px; padding-left: 23px; display: flex; align-items: center; gap: 17px; border: 2px solid #747775; border-radius: 34px; font-size: 27px; letter-spacing: -.48px; line-height: 32px; }
.profile .line:not([stroke]) { stroke: #1f56d1; }

/* App header */
.apphead { height: 88px; flex: none; padding: 0 0 1px 28px; display: grid; grid-template-columns: 41px 126px 43px 36px 60px 66px 36px 215px 33px 1599px 270px 33px 181px 32px 50px; align-items: center; background: #f9f9f9; border-bottom: 3px solid #dbdbe5; font-size: 22px; letter-spacing: -.04px; }
.apphead .name { font-weight: 500; letter-spacing: .9px; }
.apphead > .line:not(.pale):not(.dim) { color: #666; }
.dim { color: #a3a3a3; }
.pale { color: #bababa; }
.start { width: 142px; height: 52px; display: grid; place-items: center; border: 2px solid #dcdcdc; border-radius: 8px; }
.toggles { width: 235px; height: 52px; display: grid; grid-template-columns: 78px 79px 78px; align-items: center; background: #eee; border-radius: 10px; }
.toggles > div { height: 48px; display: grid; place-items: center; }
.toggles .on, .publish { background: #fff; border-radius: 8px; color: #111; box-shadow: 0 0 2px rgba(0,0,0,.35), 0 2px 5px rgba(0,0,0,.2); }
.publish { width: 148px; height: 56px; display: grid; place-items: center; font-weight: 500; letter-spacing: .48px; box-shadow: 0 0 2px rgba(0,0,0,.25), 0 5px 14px rgba(0,0,0,.16); }
.avatar { width: 50px; height: 50px; padding-top: 13px; display: flex; flex-direction: column; align-items: center; gap: 3px; border-radius: 50%; background: #6f71d3; }
.avatar small { font-size: 5px; line-height: 6px; letter-spacing: 0; color: #4d4a7d; }

.body { display: flex; flex: none; height: 1294px; background: #f9f9f9; }
.rail { width: 96px; padding-top: 6px; display: flex; flex-direction: column; border-right: 3px solid #dbdbe5; background: #fafafa; color: #a3a3a3; }
.rail div { height: 80px; display: grid; place-items: center; }
.rail .active { width: 69px; height: 69px; margin: 5px 12px; background: #fff; border-radius: 10px; box-shadow: 0 0 2px rgba(0,0,0,.25), 0 4px 14px rgba(0,0,0,.17); }

/* Firebase panel */
.panel { width: 640px; border-right: 3px solid #dbdbe5; }
.phead { height: 60px; padding: 17px 0 0 20px; background: #fdfdfd; border-bottom: 3px solid #dbdbe5; font-size: 23px; font-weight: 500; letter-spacing: .5px; }
.statussec { height: 91px; padding: 16px 13px 16px 16px; border-bottom: 3px solid #dbdbe5; }
.statusbox { height: 56px; padding-left: 20px; display: flex; align-items: center; border: 2px solid #dbdbe5; border-radius: 10px; }
.dot { width: 17px; height: 17px; border-radius: 50%; background: #65a05a; box-shadow: 0 0 8px rgba(100,165,90,.6); }
.statusbox .dot { margin: 0 16px 0 20px; }
.statusbox b, .panel b { font-weight: 500; color: #111; }
.panel h3 { height: 57px; padding: 15px 0 0 24px; background: #fdfdfd; border-bottom: 3px solid #dbdbe5; font-size: 21px; font-weight: 500; letter-spacing: .5px; color: #111; }
.details { height: 283px; padding: 16px 13px 0 16px; border-bottom: 3px solid #dbdbe5; }
.field { display: grid; grid-template-columns: 220px 388px; align-items: center; color: #a3a3a3; }
.field + .field { margin-top: 16px; }
.val { height: 60px; padding: 0 17px 0 8px; display: flex; align-items: center; justify-content: space-between; background: #eee; border-radius: 10px; color: #c4c4c4; }
code { height: 44px; width: 308px; padding-left: 12px; display: flex; align-items: center; border: 2px solid #dbdbe5; border-radius: 8px; background: #fdfdfd; font: 21px "Liberation Mono", monospace; letter-spacing: .49px; color: #111; }
.field:first-child code { width: 146px; }
hr { margin-top: 21px; border: 0; height: 2px; background: #dbdbe5; }
.console { height: 64px; margin-top: 21px; display: flex; align-items: center; justify-content: center; gap: 22px; padding-left: 3px; background: #fdfdfd; border: 2px solid #dbdbe5; border-radius: 10px; font-size: 22px; letter-spacing: .74px; color: #111; }
.steps { padding: 35px 29px 0 32px; }
.step { display: grid; grid-template-columns: 44px 532px; margin-bottom: 23px; height: 116px; }
.step.act { height: 196px; }
.mark { width: 24px; display: flex; flex-direction: column; align-items: center; gap: 12px; }
.mark i { width: 24px; height: 24px; display: grid; place-items: center; border-radius: 50%; background: #cfe0cb; color: #62a05a; }
.mark::after { content: ""; width: 2px; flex: 1; background: #cfe0cb; }
.info { padding-top: 1px; }
.step b { display: block; font-size: 23px; letter-spacing: .56px; }
.step p { margin-top: 15px; letter-spacing: .5px; }
.step small { display: block; margin-top: 13px; font-size: 19px; letter-spacing: .48px; color: #a3a3a3; }
.sbtn { height: 64px; margin-top: 18px; display: grid; place-items: center; border: 2px solid #dbdbe5; border-radius: 10px; letter-spacing: .17px; color: #111; }

/* Preview */
.center { width: 1125px; }
.ctabs { height: 60px; padding-left: 8px; display: grid; grid-template-columns: 155px 102px 741px 60px 24px; align-items: center; background: #fdfdfd; border-bottom: 3px solid #dbdbe5; color: #a3a3a3; }
.cur { width: 130px; height: 41px; display: grid; place-items: center; border-radius: 8px; background: #fff; color: #111; font-weight: 500; letter-spacing: .02px; box-shadow: 0 0 2px rgba(0,0,0,.35), 0 2px 5px rgba(0,0,0,.17); }
.canvas { height: 1234px; padding: 16px 17px 16px 16px; display: flex; flex-direction: column; }
.tools { height: 54px; display: flex; gap: 13px; }
.inspect { width: 237px; padding-left: 17px; display: flex; align-items: center; gap: 21px; background: #eee; border-radius: 10px; letter-spacing: .39px; }
.switch { width: 40px; height: 24px; border-radius: 12px; background: #f7f7f7; }
.switch i { display: block; width: 24px; height: 24px; border-radius: 50%; background: #adadad; }
.device { width: 53px; display: grid; place-items: center; background: #f1f1f1; border-radius: 10px; color: #a3a3a3; }
.zoom { width: 204px; margin-left: auto; padding: 0 16px; display: flex; align-items: center; justify-content: space-between; background: #f1f1f1; border-radius: 10px; color: #a3a3a3; }
.zoom span { color: #111; letter-spacing: -.22px; }
.phone { width: 478px; height: 1035px; margin: 29px 0 0 307px; padding: 14px 14px 13px; background: #dadae3; border-radius: 42px; box-shadow: 0 0 3px rgba(0,0,0,.15), 0 12px 34px rgba(0,0,0,.18); }
.screen { width: 450px; height: 1008px; border-radius: 29px; overflow: hidden; background: #fff; display: flex; flex-direction: column; align-items: center; font-family: "Roboto", sans-serif; }
.appbar { width: 450px; height: 61px; flex: none; padding: 0 12px 0 19px; display: grid; grid-template-columns: 129px 251px 1fr; align-items: center; background: #6849b8; color: #fff; box-shadow: 0 1px 3px rgba(0,0,0,.3); }
.appbar .line:last-child { justify-self: end; }
.appbar .line { stroke-width: 2.600; }
.appbar b { font-size: 22px; font-weight: 500; letter-spacing: -.28px; -webkit-text-stroke: .4px; }
.pin { margin: 75px 3px 0 0; }
.screen p { margin-top: 22px; font-size: 17px; letter-spacing: .41px; color: #5c5f66; }
.add { width: 284px; height: 35px; margin-top: 22px; display: flex; align-items: center; justify-content: center; gap: 12px; background: #6849b8; border-radius: 8px; color: #fff; font-size: 17px; font-weight: 400; letter-spacing: .22px; box-shadow: 0 1px 4px rgba(0,0,0,.25); }
.camera { width: 60px; height: 60px; margin: 24px 0 0 auto; display: grid; place-items: center; background: #f1f1f1; border-radius: 12px; color: #a3a3a3; }
.props { width: 62px; padding: 20px 0 0; display: flex; flex-direction: column; align-items: center; gap: 15px; border-left: 2px solid #dbdbe5; border-right: 3px solid #dbdbe5; background: #fafafa; color: #a3a3a3; font-size: 22px; font-weight: 500; letter-spacing: .9px; }
.props span { writing-mode: vertical-rl; }

/* Agent */
.agent { width: 957px; }
.agent .vsep { height: 32px; }
.ahead { height: 60px; padding-left: 17px; display: grid; grid-template-columns: 593px 150px 24px 108px 23px 24px; align-items: center; background: #fdfdfd; border-bottom: 3px solid #dbdbe5; font-size: 22px; letter-spacing: -.15px; }
.ahead b { font-weight: 600; letter-spacing: .8px; }
.ahead .line, .thread .line { color: #a3a3a3; }
.thread { height: 62px; padding-left: 13px; display: grid; grid-template-columns: 608px 47px 123px 42px 20px 43px 19px 24px; align-items: center; border-bottom: 2px solid #dbdbe5; font-size: 20px; color: #a3a3a3; letter-spacing: .4px; }
.thread .title { font-size: 21px; letter-spacing: .49px; color: #737373; }
.msgs { position: relative; height: 824px; padding: 26px 0 0 29px; overflow: hidden; font-size: 23px; letter-spacing: .55px; line-height: 40px; }
.msgs h4 { height: 40px; display: flex; align-items: center; gap: 10px; font-size: 23px; font-weight: 600; letter-spacing: .45px; }
.msgs h4:first-child { font-weight: 500; letter-spacing: .1px; }
.msgs p { margin-top: 34px; }
.msgs .g1 { margin-top: 32px; }
.msgs .g2 { margin-top: 22px; }
.msgs ul { margin-top: 28px; list-style: none; display: flex; flex-direction: column; gap: 16px; }
.msgs li { position: relative; padding-left: 57px; }
.msgs li::before { content: ""; position: absolute; left: 20px; top: 17px; width: 7px; height: 7px; border-radius: 50%; background: #111; }
.msgs li svg { display: inline-block; vertical-align: -4px; margin-right: 10px; }
.msgs li b { font-weight: 600; letter-spacing: .38px; }
.card { position: absolute; left: 9px; top: 12px; width: 936px; height: 74px; padding: 2px 0 0 28px; display: flex; align-items: center; gap: 13px; background: rgba(255,255,255,.94); border-radius: 8px; box-shadow: 0 0 2px rgba(0,0,0,.2), 0 10px 30px rgba(0,0,0,.2); font-size: 19px; letter-spacing: .47px; }
.ava { width: 28px; height: 28px; display: flex; flex-direction: column; align-items: center; justify-content: center; gap: 2px; border-radius: 50%; background: #f6f6f6; box-shadow: 0 3px 10px rgba(0,0,0,.2); }
.ava i { width: 14px; height: 2px; background: #777; }
.chips { margin-top: 23px; height: 41px; padding-left: 29px; display: flex; align-items: center; gap: 24px; color: #b0b0b0; }
.chip { width: 176px; height: 41px; padding-left: 11px; display: flex; align-items: center; gap: 12px; border: 2px solid #dbdbe5; border-radius: 8px; background: #fdfdfd; color: #737373; font-weight: 500; letter-spacing: .39px; }
.chip span { margin-left: -1px; }
.chip span + .line { margin-left: 3px; stroke-width: 2.800; }
.prompt { width: 920px; height: 248px; margin: 16px 0 0 17px; padding: 28px 20px 20px; display: flex; flex-direction: column; justify-content: space-between; border-radius: 16px; background: #fdfdfd; box-shadow: 0 0 3px rgba(0,0,0,.2), 0 6px 22px rgba(0,0,0,.17); color: #a3a3a3; font-size: 24px; line-height: 28px; letter-spacing: .56px; }
.prompt span { padding-left: 4px; }
.acts { display: flex; justify-content: space-between; color: #6b6b6b; }
.acts div { width: 48px; height: 48px; display: grid; place-items: center; border-radius: 8px; }
.img { border: 2px solid #dcdcdc; }
.send { background: #f1f1f1; }

/* Status bar */
.statusbar { height: 76px; flex: none; padding-left: 21px; display: grid; grid-template-columns: 38px 86px 36px 37px 262px 35px 172px 29px 105px 1565px 36px 116px 36px 156px 36px 100px; align-items: center; border-top: 3px solid #dbdbe5; background: linear-gradient(90deg, #f9f9f9 100px, rgba(249,249,249,0) 380px, rgba(249,249,249,0) 2480px, #f9f9f9 2780px), linear-gradient(#fafafa, #f0f0f0 50%, #dbdbdb); color: #a3a3a3; }
.statusbar .vsep { width: 3px; height: 32px; }
.statusbar .br { font-size: 22px; letter-spacing: .68px; }
.statusbar .t { letter-spacing: .22px; }
.statusbar .run { color: #737373; }

/* Dock */
.dock { margin: 2px 0 0 162px; width: 2556px; height: 106px; padding: 0 16px 0 14px; display: flex; gap: 20px; border: 2px solid rgba(255,255,255,.22); border-radius: 32px; background: linear-gradient(90deg, #8b6ca7 0, #8f6fa5 11%, #b97f9f 15.5%, #d98f98 19%, #e5968f 31%, #ea987f 52%, #e8987b 60%, #c48f83 64%, #9b7586 70%, #7a7490 74.5%, #86688d 79%, #9a6a8d 84%, #8b587e 95%, #c08388 100%); letter-spacing: 0; }
.app { position: relative; width: 68px; height: 68px; flex: none; margin-top: 14px; border-radius: 16px; box-shadow: 0 1px 3px rgba(0,0,0,.35); }
.app > svg { width: 68px; height: 68px; border-radius: 16px; }
.open::after { content: ""; position: absolute; left: 30px; top: 78px; width: 8px; height: 8px; border-radius: 50%; background: #3a0a22; }
.badge { position: absolute; right: -10px; top: -8px; min-width: 32px; height: 32px; padding: 0 6px; border-radius: 16px; background: #ea5545; color: #fff; font-size: 20px; line-height: 32px; text-align: center; letter-spacing: -.5px; }
.badge.wide { right: -8px; padding: 0; width: 52px; letter-spacing: -1.200px; }
.finder { background: linear-gradient(#55c3f8, #2f6df0); }
.launch { background: #d4c8dd; }
.ff { background: #20123f; }
.white { background: #fdfdfd; }
.safari { background: linear-gradient(#fff, #dcdcdc); }
.msg { background: linear-gradient(#86ec79, #52c340); }
.mail { background: linear-gradient(#3a6fec, #53b8f8); }
.maps { background: #f0efe9; }
.cal { background: #fbfbfb; overflow: hidden; color: #222; text-align: center; }
.cal b { display: block; height: 21px; background: #e4604f; color: #fff; font-size: 15px; line-height: 22px; font-weight: 600; }
.cal span { display: block; font-size: 42px; font-weight: 300; line-height: 44px; letter-spacing: -2px; }
.book { background: #a88350; }
.book i { position: absolute; right: -3px; top: 12px; width: 3px; height: 48px; background: linear-gradient(#b9b9b9 30%, #58a7e0 30% 55%, #ef9a3c 55% 75%, #67c95b 75%); }
.notes { background: linear-gradient(#fbd94f, #f6c83e 17px, #fafaf8 17px, #e9e9e6); }
.tv { background: linear-gradient(#293431, #0c1012); }
.music { background: linear-gradient(#ee6277, #e73744); }
.flow { background: #4a38e6; }
.pod { background: linear-gradient(#bb63e6, #6f2aac); }
.store { background: linear-gradient(#4fb2ef, #2a62dc); }
.prefs { background: linear-gradient(#ced4da, #8f8f8c); }
.cursor { background: #050505; }
.view { background: #ececee; }
.view > svg { overflow: visible; }
.dsep { width: 2px; height: 78px; margin: 12px 8px 0 9px; background: rgba(70,20,60,.6); }
.dsep ~ .dsep { margin-left: 11px; }
.thumb { position: relative; width: 78px; height: 45px; margin: 26px 0 0 -6px; display: flex; background: #fff; }
.mint { width: 38px; padding: 14px 0 0 13px; background: #cdf7ee; font-size: 5px; line-height: 6px; color: #16302f; }
.ffmini { position: absolute; left: 51px; top: 34px; width: 26px; height: 26px; }
.trash { margin: 6px 0 0 -2px; }
```
